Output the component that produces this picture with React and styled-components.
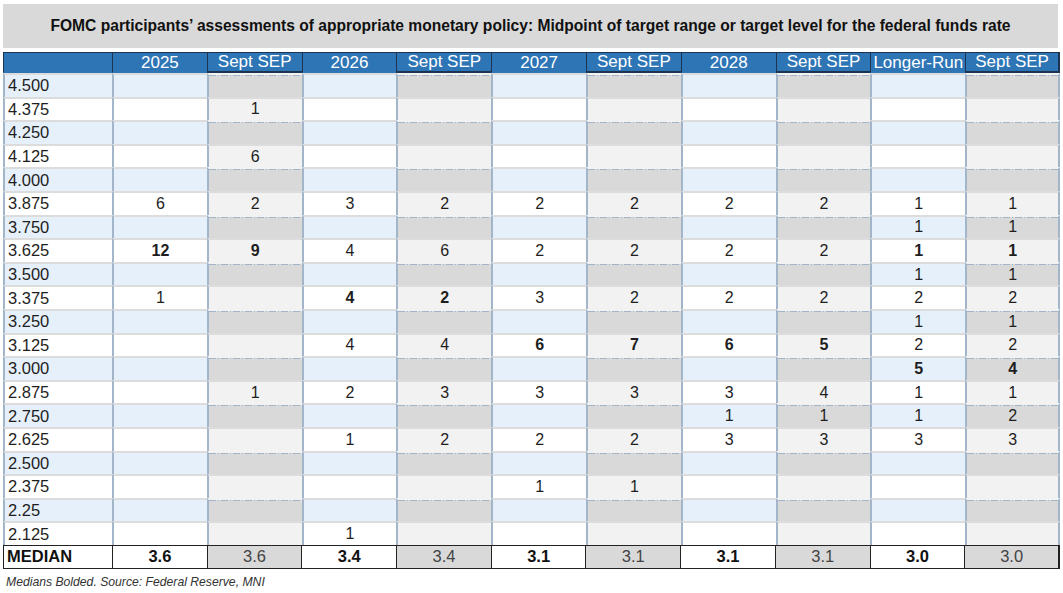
import React from 'react'
import styled, { createGlobalStyle } from 'styled-components'

const GlobalStyle = createGlobalStyle`
  body {
    margin: 0;
    background: #ffffff;
    font-family: "Liberation Sans", Arial, sans-serif;
  }
`

const columns = ['2025', 'Sept SEP', '2026', 'Sept SEP', '2027', 'Sept SEP', '2028', 'Sept SEP', 'Longer-Run', 'Sept SEP']

// values per row; "*" suffix marks the bolded median
const rows = [
  ['4.500', []],
  ['4.375', ['', '1']],
  ['4.250', []],
  ['4.125', ['', '6']],
  ['4.000', []],
  ['3.875', ['6', '2', '3', '2', '2', '2', '2', '2', '1', '1']],
  ['3.750', ['', '', '', '', '', '', '', '', '1', '1']],
  ['3.625', ['12*', '9*', '4', '6', '2', '2', '2', '2', '1*', '1*']],
  ['3.500', ['', '', '', '', '', '', '', '', '1', '1']],
  ['3.375', ['1', '', '4*', '2*', '3', '2', '2', '2', '2', '2']],
  ['3.250', ['', '', '', '', '', '', '', '', '1', '1']],
  ['3.125', ['', '', '4', '4', '6*', '7*', '6*', '5*', '2', '2']],
  ['3.000', ['', '', '', '', '', '', '', '', '5*', '4*']],
  ['2.875', ['', '1', '2', '3', '3', '3', '3', '4', '1', '1']],
  ['2.750', ['', '', '', '', '', '', '1', '1', '1', '2']],
  ['2.625', ['', '', '1', '2', '2', '2', '3', '3', '3', '3']],
  ['2.500', []],
  ['2.375', ['', '', '', '', '1', '1']],
  ['2.25', []],
  ['2.125', ['', '', '1']],
]

const medians = ['3.6', '3.6', '3.4', '3.4', '3.1', '3.1', '3.1', '3.1', '3.0', '3.0']

const Page = styled.div`
  width: 1063px;
  height: 593px;
  padding: 4px 3px 0 3px;
  box-sizing: border-box;
  display: flex;
  flex-direction: column;
`

const Title = styled.div`
  height: 44px;
  width: 1055px;
  background: #d9d9d9;
  display: flex;
  align-items: center;
  justify-content: center;
  font-weight: bold;
  font-size: 15.6px;
  color: #111;
  margin-bottom: 4px;
`

const Grid = styled.div`
  display: grid;
  grid-template-columns: 109px repeat(10, 1fr);
  width: 1057px;
  box-sizing: border-box;
`

const HeaderRow = styled(Grid)`
  height: 21px;
  background: #2e75b6;
  border-top: 1px solid #1c3450;
`

const HeadCell = styled.div`
  display: flex;
  align-items: center;
  justify-content: center;
  color: #fff;
  font-size: 17px;
  white-space: nowrap;
  overflow: hidden;
  border-left: 1px solid #1c3450;
  border-bottom: ${p => (p.$sep ? '2px solid #1c3450' : '1px solid #2e75b6')};
  &:last-child {
    border-right: 2px solid #1c3450;
  }
`

const BodyRow = styled(Grid)`
  height: 23.6px;
`

const dashDot =
  'repeating-linear-gradient(90deg, #a3b5c8 0 7px, transparent 7px 9px, #a3b5c8 9px 10px, transparent 10px 12px)'

const Cell = styled.div`
  display: flex;
  align-items: center;
  justify-content: ${p => (p.$label ? 'flex-start' : 'center')};
  padding-left: ${p => (p.$label ? '3px' : '0')};
  box-sizing: border-box;
  font-size: ${p => (p.$label ? '16.5px' : '16px')};
  font-weight: ${p => (p.$bold ? 'bold' : 'normal')};
  color: #1e1e1e;
  border-left: 2px solid #a2b5c9;
  border-top: 2px solid ${p => (p.$sep && p.$shade ? '#f2f2f2' : '#dcdcdc')};
  background-color: ${p =>
    p.$shade ? (p.$sep ? '#d9d9d9' : '#e6f0fa') : p.$sep ? '#f2f2f2' : '#ffffff'};
  background-image: ${p => (p.$sep && p.$shade ? dashDot : 'none')};
  background-size: 100% 1px;
  background-repeat: no-repeat;
  background-position: top left;
  &:last-child {
    border-right: 2px solid #a2b5c9;
  }
`

const MedianRow = styled(Grid)`
  height: 24px;
  border-top: 1px solid #222;
  border-bottom: 1px solid #222;
  border-left: 1px solid #222;
`

const MedianCell = styled.div`
  display: flex;
  align-items: center;
  justify-content: ${p => (p.$label ? 'flex-start' : 'center')};
  padding-left: ${p => (p.$label ? '3px' : '0')};
  font-size: 16.5px;
  font-weight: ${p => (p.$sep ? 'normal' : 'bold')};
  color: ${p => (p.$sep ? '#444' : '#111')};
  background: ${p => (p.$sep ? '#d9d9d9' : '#fff')};
  border-right: 1px solid #222;
  &:last-child {
    border-right: 2px solid #222;
  }
`

const Note = styled.div`
  margin-top: 6px;
  padding-left: 3px;
  font-size: 12.2px;
  font-style: italic;
  color: #333;
`

export default function App() {
  return (
    <Page>
      <GlobalStyle />
      <Title>
        FOMC participants’ assessments of appropriate monetary policy: Midpoint of target range or target level for the federal funds rate
      </Title>
      <HeaderRow>
        <HeadCell />
        {columns.map((c, i) => (
          <HeadCell key={i} $sep={i % 2 === 1}>{c}</HeadCell>
        ))}
      </HeaderRow>
      {rows.map(([label, vals], r) => {
        const shade = r % 2 === 0
        return (
          <BodyRow key={label}>
            <Cell $label $shade={shade}>{label}</Cell>
            {columns.map((_, i) => {
              const raw = vals[i] || ''
              const bold = raw.endsWith('*')
              return (
                <Cell key={i} $sep={i % 2 === 1} $shade={shade} $bold={bold}>
                  {raw.replace('*', '')}
                </Cell>
              )
            })}
          </BodyRow>
        )
      })}
      <MedianRow>
        <MedianCell $label>MEDIAN</MedianCell>
        {medians.map((m, i) => (
          <MedianCell key={i} $sep={i % 2 === 1}>{m}</MedianCell>
        ))}
      </MedianRow>
      <Note>Medians Bolded. Source: Federal Reserve, MNI</Note>
    </Page>
  )
}
